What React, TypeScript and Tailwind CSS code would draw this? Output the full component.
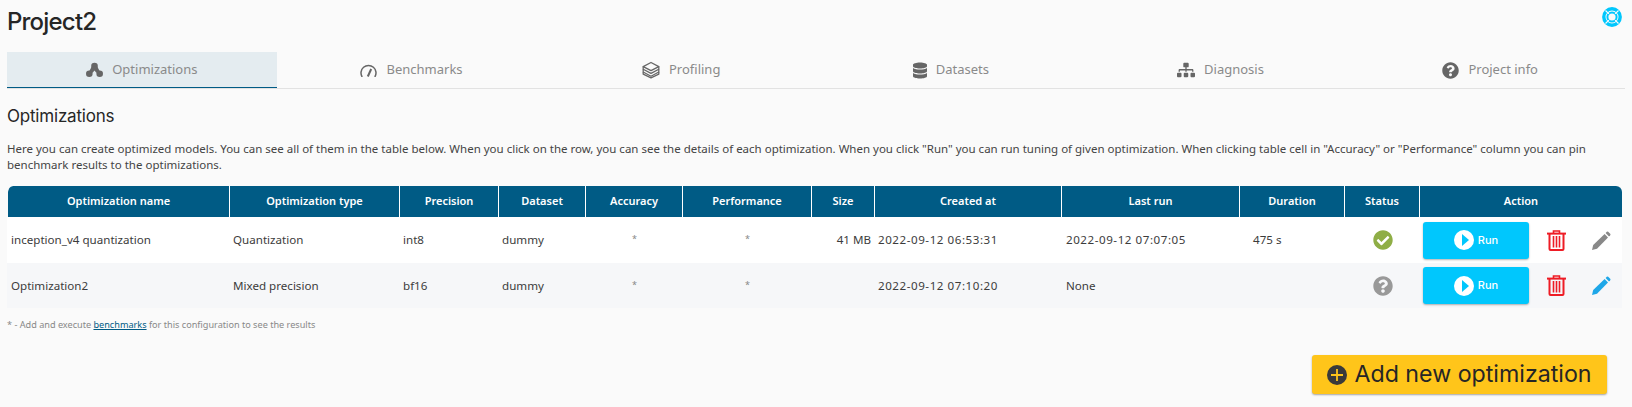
import React from 'react';
import { FaCheckCircle, FaDatabase, FaQuestionCircle, FaSitemap } from 'react-icons/fa';

const tabs = ['Optimizations', 'Benchmarks', 'Profiling', 'Datasets', 'Diagnosis', 'Project info'];

const columns = [
  { name: 'Optimization name', width: 'w-[223px]' },
  { name: 'Optimization type', width: 'w-[170px]' },
  { name: 'Precision', width: 'w-[99px]' },
  { name: 'Dataset', width: 'w-[87px]' },
  { name: 'Accuracy', width: 'w-[97px]' },
  { name: 'Performance', width: 'w-[129px]' },
  { name: 'Size', width: 'w-[63px]' },
  { name: 'Created at', width: 'w-[187px]' },
  { name: 'Last run', width: 'w-[178px]' },
  { name: 'Duration', width: 'w-[105px]' },
  { name: 'Status', width: 'w-[75px]' },
  { name: 'Action', width: 'w-[202px]' },
];

const rows = [
  {
    name: 'inception_v4 quantization',
    type: 'Quantization',
    precision: 'int8',
    size: '41 MB',
    created: '2022-09-12 06:53:31',
    lastRun: '2022-09-12 07:07:05',
    duration: '475 s',
    done: true,
  },
  {
    name: 'Optimization2',
    type: 'Mixed precision',
    precision: 'bf16',
    size: '',
    created: '2022-09-12 07:10:20',
    lastRun: 'None',
    duration: '',
    done: false,
  },
];

function OptimizationsIcon() {
  return (
    <svg viewBox="0 0 18 16" className="w-[17px] h-[16px] fill-[#666]">
      <circle cx="9" cy="3.8" r="3.5" />
      <circle cx="3.5" cy="12" r="3.5" />
      <circle cx="14.5" cy="12" r="3.5" />
      <path d="M6 4.5h6l3 5.5-4 1-2-2.5L7 11l-4-1z" />
    </svg>
  );
}

function GaugeIcon() {
  return (
    <svg viewBox="0 0 17 13" className="w-[17px] h-[13px] fill-none stroke-[#666]">
      <path d="M2.2 13A7.5 7.5 0 1 1 14.8 13" strokeWidth="1.5" />
      <path d="M7.8 12.5 11.2 5" strokeWidth="2" />
    </svg>
  );
}

function LayersIcon() {
  return (
    <svg viewBox="0 0 18 18" className="w-[18px] h-[18px] fill-none stroke-[#666]" strokeWidth="1.3" strokeLinejoin="round">
      <path d="M9 1.5 1.2 5.6 9 9.7l7.8-4.1z" />
      <path d="M1.2 5.6v2.6L9 12.4l7.8-4.2V5.6" />
      <path d="M1.2 8.2v2.8L9 15.2l7.8-4.2V8.2" />
      <path d="M1.2 11v2.2L9 16.8l7.8-3.6V11" />
    </svg>
  );
}

function LifeRingIcon() {
  return (
    <svg viewBox="0 0 20 20" className="w-[20px] h-[20px]">
      <circle cx="10" cy="10" r="8.2" fill="none" stroke="#00c7fd" strokeWidth="3.4" />
      <circle cx="10" cy="10" r="4.6" fill="none" stroke="#00c7fd" strokeWidth="2" />
      <path d="M3.5 3.5l3.4 3.4M16.5 3.5l-3.4 3.4M3.5 16.5l3.4-3.4M16.5 16.5l-3.4-3.4" stroke="#fafafa" strokeWidth="1.2" />
    </svg>
  );
}

function TabIcon({ index }: { index: number }) {
  if (index === 0) return <OptimizationsIcon />;
  if (index === 1) return <GaugeIcon />;
  if (index === 2) return <LayersIcon />;
  if (index === 3) return <FaDatabase className="w-[14px] h-[17px] text-[#666]" />;
  if (index === 4) return <FaSitemap className="w-[18px] h-[16px] text-[#666]" />;
  return <FaQuestionCircle className="w-[17px] h-[17px] text-[#666]" />;
}

function TrashIcon() {
  return (
    <svg viewBox="0 0 19 21" className="w-[19px] h-[21px] fill-none stroke-[#ee1c25]" strokeWidth="2">
      <path d="M0 3.6h19" />
      <path d="M6.5 3V1h6v2" strokeWidth="1.6" />
      <path d="M2.5 4v15a1 1 0 0 0 1 1h12a1 1 0 0 0 1-1V4" />
      <path d="M6.5 6v11.5M9.5 6v11.5M12.5 6v11.5" strokeWidth="1.6" />
    </svg>
  );
}

function PencilIcon({ active }: { active: boolean }) {
  return (
    <svg viewBox="0 0 19 19" className={active ? 'w-[19px] h-[19px] fill-[#1ea7e8]' : 'w-[19px] h-[19px] fill-[#888]'}>
      <path d="M0 19l1.2-5L12.6 3l3.4 3.4L5 17.8z" />
      <path d="M13.6 2l1.2-1.2a1 1 0 0 1 1.4 0l2 2a1 1 0 0 1 0 1.4L17 5.4z" />
    </svg>
  );
}

function RunButton() {
  return (
    <button className="flex items-center justify-center gap-[4px] w-[106px] h-[37px] rounded-[3px] bg-[#00c7fd] shadow-[0_1px_2px_rgba(0,0,0,0.3)] text-white text-[11px] font-medium font-['Inter',sans-serif]">
      <svg viewBox="0 0 20 20" className="w-[20px] h-[20px]">
        <circle cx="10" cy="10" r="10" fill="#fff" />
        <path d="M8 4l7 6-7 6z" fill="#00c7fd" />
      </svg>
      Run
    </button>
  );
}

export default function App() {
  return (
    <div className="w-[1632px] h-[407px] overflow-hidden bg-[#fafafa] px-[7px] font-['Noto_Sans',sans-serif] text-[#3c3c3c]">
      <div className="flex items-start justify-between h-[52px]">
        <h1 className="mt-[7px] text-[24px] leading-[30px] font-medium tracking-[-0.8px] text-[#262626] font-['Inter',sans-serif]">Project2</h1>
        <div className="mt-[7px] mr-[3px]">
          <LifeRingIcon />
        </div>
      </div>

      <div className="flex h-[37px] w-[1618px] border-b border-[#e2e2e2]">
        {tabs.map((tab, i) => (
          <div
            key={tab}
            className={
              i === 0
                ? 'flex-1 flex items-center justify-center gap-[9px] text-[13px] text-[#8a8a8a] bg-[#e4ecf0] border-b border-[#005b85]'
                : 'flex-1 flex items-center justify-center gap-[9px] text-[13px] text-[#8a8a8a]'
            }
          >
            <TabIcon index={i} />
            {tab}
          </div>
        ))}
      </div>

      <h2 className="mt-[16px] text-[17px] leading-[22px] tracking-[-0.2px] text-[#262626] font-['Inter',sans-serif]">Optimizations</h2>

      <p className="mt-[14px] w-[1610px] text-[11.5px] leading-[16px] text-[#444]">
        Here you can create optimized models. You can see all of them in the table below. When you click on the row, you can see the details of each optimization. When you click "Run" you can run tuning of given optimization. When clicking table cell in "Accuracy" or "Performance" column you can pin benchmark results to the optimizations.
      </p>

      <table className="mt-[13px] table-fixed w-[1615px] border-separate border-spacing-0 text-[11.6px]">
        <colgroup>
          {columns.map((c) => (
            <col key={c.name} className={c.width} />
          ))}
        </colgroup>
        <thead>
          <tr className="h-[31px]">
            {columns.map((c) => (
              <th
                key={c.name}
                className="bg-[#005b85] bg-clip-padding text-white text-[11px] font-semibold border-r border-white first:border-l first:border-l-[#fafafa] last:border-r-0 first:rounded-tl-[6px] last:rounded-tr-[6px]"
              >
                {c.name}
              </th>
            ))}
          </tr>
        </thead>
        <tbody>
          {rows.map((r, i) => (
            <tr key={r.name} className={i === 0 ? 'h-[46px] bg-white' : 'h-[45px] bg-[#f6f7f9]'}>
              <td className="px-[4px]">{r.name}</td>
              <td className="px-[3px]">{r.type}</td>
              <td className="px-[3px]">{r.precision}</td>
              <td className="px-[3px]">dummy</td>
              <td className="text-center text-[9px] text-[#888] pb-[2px]">*</td>
              <td className="text-center text-[9px] text-[#888] pb-[2px]">*</td>
              <td className="px-[4px] text-right">{r.size}</td>
              <td className="px-[3px] tracking-[0.55px] whitespace-nowrap">{r.created}</td>
              <td className={r.done ? 'px-[4px] tracking-[0.55px] whitespace-nowrap' : 'px-[4px] whitespace-nowrap'}>{r.lastRun}</td>
              <td className="pl-[13px]">{r.duration}</td>
              <td>
                <div className="flex justify-center">
                  {r.done ? (
                    <FaCheckCircle className="w-[20px] h-[20px] text-[#8fae46]" />
                  ) : (
                    <FaQuestionCircle className="w-[20px] h-[20px] text-[#999]" />
                  )}
                </div>
              </td>
              <td>
                <div className="flex items-center pl-[3px]">
                  <RunButton />
                  <div className="ml-[18px]">
                    <TrashIcon />
                  </div>
                  <div className="ml-[26px]">
                    <PencilIcon active={!r.done} />
                  </div>
                </div>
              </td>
            </tr>
          ))}
        </tbody>
      </table>

      <p className="mt-[10px] text-[9.15px] leading-[13px] text-[#888]">
        * - Add and execute <a className="text-[#005b85] underline">benchmarks</a> for this configuration to see the results
      </p>

      <div className="flex justify-end mt-[24px]">
        <button className="mr-[18px] flex items-center gap-[7px] justify-center w-[295px] h-[39px] rounded-[3px] bg-[#ffc51a] shadow-[0_1px_2px_rgba(0,0,0,0.35)] text-[23.2px] text-[#262626] font-['Inter',sans-serif]">
          <svg viewBox="0 0 20 20" className="w-[20px] h-[20px]">
            <circle cx="10" cy="10" r="10" fill="#3a3a3a" />
            <path d="M10 4v12M4 10h12" stroke="#ffc51a" strokeWidth="1.8" />
          </svg>
          Add new optimization
        </button>
      </div>
    </div>
  );
}
